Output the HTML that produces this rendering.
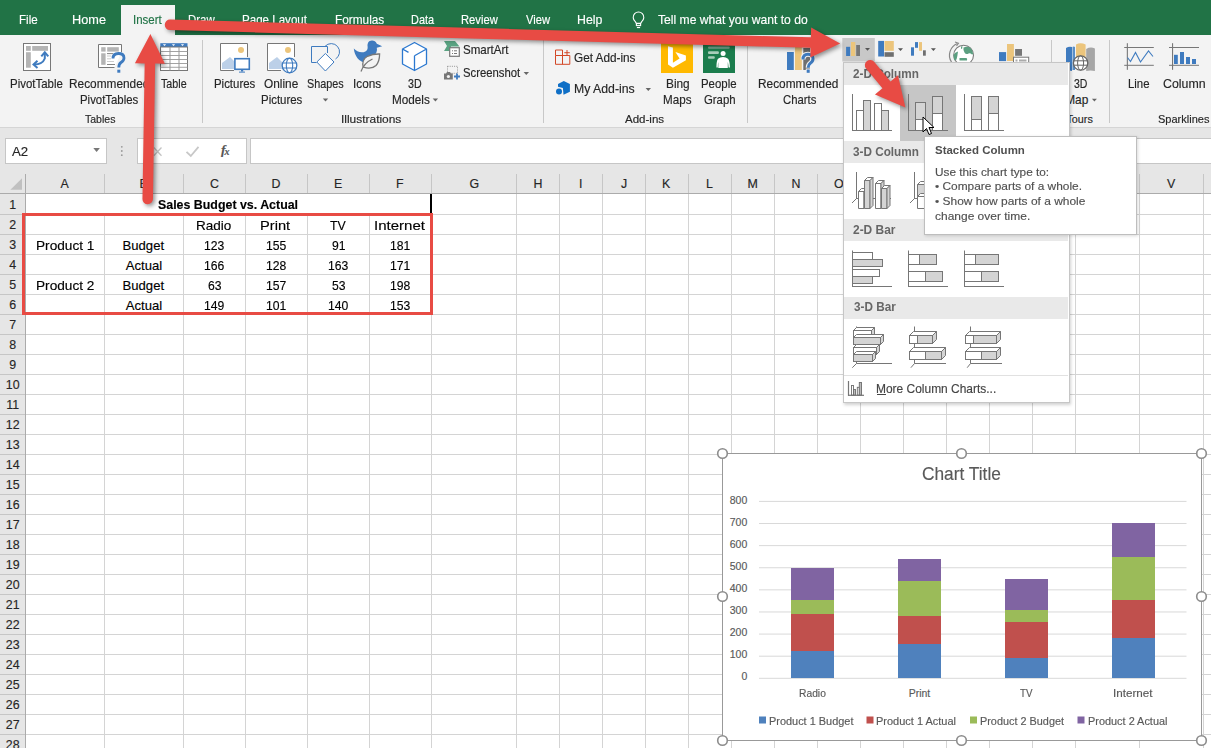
<!DOCTYPE html>
<html><head><meta charset="utf-8"><style>
html,body{margin:0;padding:0;}
body div{-webkit-text-stroke:0.15px}
body{width:1211px;height:748px;overflow:hidden;position:relative;font-family:"Liberation Sans", sans-serif;background:#fff;}
div{box-sizing:border-box;}
svg{position:absolute;overflow:visible;}
</style></head><body>
<div style="position:absolute;left:0;top:0;width:1211px;height:748px;z-index:1">
<div style="position:absolute;left:0px;top:0px;width:1211px;height:35px;background:#217346;"></div>
<div style="position:absolute;left:121px;top:5px;width:54px;height:30px;background:#f3f3f3;"></div>
<div style="position:absolute;left:0px;top:35px;width:1211px;height:92px;background:#f3f3f3;"></div>
<div style="position:absolute;left:0px;top:127px;width:1211px;height:1px;background:#d5d5d5;"></div>
<div style="position:absolute;left:0px;top:128px;width:1211px;height:65px;background:#e6e6e6;"></div>
<div style="position:absolute;left:19.39px;top:12.51px;font-size:12.7px;line-height:normal;white-space:nowrap;color:#ffffff;font-weight:400;transform:scaleX(0.9130);transform-origin:0 0;">File</div>
<div style="position:absolute;left:72.30px;top:12.51px;font-size:12.7px;line-height:normal;white-space:nowrap;color:#ffffff;font-weight:400;transform:scaleX(1.0034);transform-origin:0 0;">Home</div>
<div style="position:absolute;left:188.40px;top:12.51px;font-size:12.7px;line-height:normal;white-space:nowrap;color:#ffffff;font-weight:400;transform:scaleX(0.9000);transform-origin:0 0;">Draw</div>
<div style="position:absolute;left:242.09px;top:12.51px;font-size:12.7px;line-height:normal;white-space:nowrap;color:#ffffff;font-weight:400;transform:scaleX(0.9120);transform-origin:0 0;">Page Layout</div>
<div style="position:absolute;left:334.57px;top:12.51px;font-size:12.7px;line-height:normal;white-space:nowrap;color:#ffffff;font-weight:400;transform:scaleX(0.9315);transform-origin:0 0;">Formulas</div>
<div style="position:absolute;left:410.64px;top:12.51px;font-size:12.7px;line-height:normal;white-space:nowrap;color:#ffffff;font-weight:400;transform:scaleX(0.8600);transform-origin:0 0;">Data</div>
<div style="position:absolute;left:461.42px;top:12.51px;font-size:12.7px;line-height:normal;white-space:nowrap;color:#ffffff;font-weight:400;transform:scaleX(0.8833);transform-origin:0 0;">Review</div>
<div style="position:absolute;left:525.90px;top:12.51px;font-size:12.7px;line-height:normal;white-space:nowrap;color:#ffffff;font-weight:400;transform:scaleX(0.8823);transform-origin:0 0;">View</div>
<div style="position:absolute;left:577.43px;top:12.51px;font-size:12.7px;line-height:normal;white-space:nowrap;color:#ffffff;font-weight:400;transform:scaleX(0.9705);transform-origin:0 0;">Help</div>
<div style="position:absolute;left:658.40px;top:12.51px;font-size:12.7px;line-height:normal;white-space:nowrap;color:#ffffff;font-weight:400;transform:scaleX(0.9559);transform-origin:0 0;">Tell me what you want to do</div>
<div style="position:absolute;left:132.80px;top:12.51px;font-size:12.7px;line-height:normal;white-space:nowrap;color:#217346;font-weight:400;transform:scaleX(0.9037);transform-origin:0 0;">Insert</div>
<div style="position:absolute;left:5px;top:138px;width:102px;height:26px;background:#fff;border:1px solid #c6c6c6"></div>
<div style="position:absolute;left:137px;top:138px;width:110px;height:26px;background:#fff;border:1px solid #c6c6c6"></div>
<div style="position:absolute;left:250px;top:138px;width:961px;height:26px;background:#fff;border:1px solid #c6c6c6;border-right:none"></div>
<div style="position:absolute;left:12.00px;top:144.33px;font-size:12.9px;line-height:normal;white-space:nowrap;color:#262626;font-weight:400;transform:scaleX(1.0258);transform-origin:0 0;">A2</div>
<svg style="left:0;top:0" width="1211" height="748"><path d="M93.3 148 h6.6 l-3.3 4 z" fill="#777"/><circle cx="121.8" cy="146.8" r="0.9" fill="#999"/><circle cx="121.8" cy="151" r="0.9" fill="#999"/><circle cx="121.8" cy="155.2" r="0.9" fill="#999"/><path d="M153.8 147.5 L161.5 155.7 M161.5 147.5 L153.8 155.7" stroke="#c4c4c4" stroke-width="1.3"/><path d="M186.5 151.8 L190.8 156 L198.5 146.8" fill="none" stroke="#c8c8c8" stroke-width="1.8"/><path d="M636.4 23.4 L635.1 21.4 A5.3 5.3 0 1 1 641.9 21.4 L640.6 23.4 Z" fill="none" stroke="#fff" stroke-width="1.1"/><rect x="636.4" y="23.6" width="4.2" height="2" fill="none" stroke="#fff" stroke-width="1.1"/><rect x="636.9" y="27" width="3.2" height="1.1" fill="#fff"/></svg>
<div style="position:absolute;left:221px;top:142px;font-family:'Liberation Serif',serif;font-style:italic;font-weight:bold;font-size:13.5px;color:#555;line-height:normal;white-space:nowrap">f<span style="font-size:10px;position:relative;left:-1px;top:1px">x</span></div>
<svg style="left:0;top:0" width="1211" height="748"><path d="M22 178.2 V189.7 H10.4 Z" fill="#c0c0c0"/></svg>
</div>
<div style="position:absolute;left:0;top:0;width:1211px;height:748px;z-index:3">
<svg style="left:0;top:0" width="1211" height="748" viewBox="0 0 1211 748"><rect x="202.0" y="40" width="1" height="83" fill="#c8c8c8"/><rect x="543.0" y="40" width="1" height="83" fill="#c8c8c8"/><rect x="747.0" y="40" width="1" height="83" fill="#c8c8c8"/><rect x="1051.0" y="40" width="1" height="83" fill="#c8c8c8"/><rect x="1109.0" y="40" width="1" height="83" fill="#c8c8c8"/><rect x="23.5" y="43.5" width="27" height="27" fill="#fff" stroke="#777" stroke-width="1"/><rect x="26" y="46" width="4.8" height="4.8" fill="#b4b4b4"/><rect x="32.2" y="46" width="15.8" height="4.8" fill="#b4b4b4"/><rect x="26" y="52.2" width="4.8" height="15.5" fill="#b4b4b4"/><path d="M34 64.5 Q42.5 64.5 44.8 58.5 L44.8 53" fill="none" stroke="#3f7bbf" stroke-width="2"/><path d="M41.3 56.3 L44.8 52.3 L48.3 56.3" fill="none" stroke="#3f7bbf" stroke-width="2"/><path d="M37.5 60.8 L33.5 64.5 L37.5 68" fill="none" stroke="#3f7bbf" stroke-width="2"/><path d="M114.5 67.5 H98.5 V44.5 H121.5 V52" fill="#fff" stroke="#777" stroke-width="1"/><rect x="101.2" y="47.2" width="4.4" height="4.4" fill="#b4b4b4"/><rect x="107.2" y="47.2" width="11.6" height="4.4" fill="#b4b4b4"/><rect x="101.2" y="53.3" width="4.4" height="11.5" fill="#b4b4b4"/><rect x="107" y="53.2" width="6" height="0.9" fill="#777"/><rect x="107" y="55.5" width="4" height="1" fill="#ccc"/><rect x="107" y="58.3" width="4" height="1" fill="#ccc"/><rect x="107" y="61" width="7" height="1" fill="#ccc"/><rect x="107" y="64" width="8" height="0.9" fill="#777"/><path d="M113 58.5 Q113 53.5 118.5 53.5 Q124 53.5 124 58 Q124 60.5 121 62.5 Q118.8 64 118.8 67.5" fill="none" stroke="#3f7bbf" stroke-width="2.8"/><rect x="117.3" y="69.7" width="3" height="3" fill="#3f7bbf"/><rect x="160.3" y="43.2" width="27.2" height="4" fill="#3f7bbf"/><rect x="160.5" y="47" width="27" height="23.5" fill="#fff" stroke="#777" stroke-width="1"/><rect x="169.5" y="47" width="1" height="23.5" fill="#999"/><rect x="178.5" y="47" width="1" height="23.5" fill="#999"/><rect x="160.5" y="51" width="27" height="0.9" fill="#999"/><rect x="160.5" y="55" width="27" height="0.9" fill="#999"/><rect x="160.5" y="59" width="27" height="0.9" fill="#999"/><rect x="160.5" y="63" width="27" height="0.9" fill="#999"/><rect x="160.5" y="66.8" width="27" height="0.9" fill="#999"/><path d="M162.9 44.3 h3.2 l-1.6 1.8 z" fill="#fff"/><path d="M171.9 44.3 h3.2 l-1.6 1.8 z" fill="#fff"/><path d="M180.9 44.3 h3.2 l-1.6 1.8 z" fill="#fff"/><path d="M234 70.5 H220.5 V43.5 H247.5 V57" fill="#fff" stroke="#777" stroke-width="1"/><circle cx="241" cy="49.9" r="3" fill="#ecc57c"/><path d="M222 69 V63 L230 57 L235 62 V69 Z" fill="#bcd0e8"/><rect x="234.9" y="58.7" width="14.4" height="10.6" fill="#fff" stroke="#3f7bbf" stroke-width="1.6"/><rect x="241" y="70" width="2.2" height="1.5" fill="#3f7bbf"/><rect x="239" y="71.6" width="6" height="1" fill="#3f7bbf"/><path d="M281 70.5 H267.5 V43.5 H294.5 V57" fill="#fff" stroke="#777" stroke-width="1"/><circle cx="288" cy="49.9" r="3" fill="#ecc57c"/><path d="M269 69 V63 L277 57 L282 62 V69 Z" fill="#bcd0e8"/><circle cx="289.5" cy="65.5" r="7.3" fill="#fff" stroke="#3f7bbf" stroke-width="1.3"/><ellipse cx="289.5" cy="65.5" rx="3.2" ry="7.3" fill="none" stroke="#3f7bbf" stroke-width="1.1"/><path d="M282.5 63 H296.5 M282.5 68 H296.5" stroke="#3f7bbf" stroke-width="1.1"/><path d="M325 46.4 A8.3 8.3 0 1 1 335.5 59" fill="none" stroke="#3f7bbf" stroke-width="1"/><path d="M316.5 62.5 H311.5 V46.5 H327.5 V53" fill="none" stroke="#3f7bbf" stroke-width="1"/><path d="M325.4 53.5 L334 62 L325.4 71 L316.8 62 Z" fill="#fff" stroke="#3f7bbf" stroke-width="1"/><path d="M353.8 48.5 C354.5 56 359 62 366 63 L373 57 C376.5 54 377.5 50.5 376.8 47.8 L382.2 46.3 L376.8 43.8 C376 41.5 374 40.6 372 40.6 C368.5 40.6 367.3 43.5 367.6 46.5 C368 49.5 366.5 52.3 362 52.3 C358.5 52.3 356 50.8 353.8 48.5 Z" fill="#3f7bbf"/><path d="M363.2 67.2 Q361.5 59.5 367.5 56.3 Q373 53.8 379.6 54 Q379.6 61.5 376 65.5 Q371.5 69.8 363.2 67.2 Z" fill="#f3f3f3" stroke="#777" stroke-width="1.3"/><path d="M361 71.5 Q364 63 372.5 59" fill="none" stroke="#777" stroke-width="1.3"/><path d="M414.5 42.5 L426.5 49 V64 L414.5 70.5 L402.5 64 V49 Z M402.5 49 L408.5 52.4 M414.5 55.8 L426.5 49 M414.5 55.8 V70.5" fill="#fff" stroke="#2b78d0" stroke-width="1.3" stroke-linejoin="round"/><path d="M444 41 H455 L459.5 46.5 H451 V51 H444 L447 46 Z" fill="#5aa382"/><rect x="449.7" y="47.7" width="9.6" height="8.6" fill="#fff" stroke="#777" stroke-width="1.2"/><rect x="452" y="50.3" width="1" height="1" fill="#777"/><rect x="454" y="50.3" width="3" height="1" fill="#777"/><rect x="452" y="53" width="1" height="1" fill="#777"/><rect x="454" y="53" width="3" height="1" fill="#777"/><rect x="447.5" y="66.3" width="10" height="7" fill="none" stroke="#888" stroke-width="0.9" stroke-dasharray="1 1.2"/><path d="M444 73.5 H446 L447 72 H450 L451 73.5 H452.8 V79.6 H444 Z" fill="#777"/><circle cx="448.4" cy="76.5" r="1.6" fill="#f3f3f3"/><path d="M457 73.5 V79.5 M454 76.5 H460" stroke="#3f7bbf" stroke-width="1.8"/><path d="M555.5 55.5 H569.8 V64.3 H555.5 Z M562.5 50 V64.3 M555.5 50 H562.5 V55.5 M555.5 50 V55.5 M567 50 V55.5 M564.3 52.7 H569.8" fill="none" stroke="#d24726" stroke-width="1"/><path d="M558 84 L563.8 81.1 L569.9 84 V91.7 L563.5 94.8 L562.9 88 L558 86.8 Z" fill="#0f6fc6"/><circle cx="559" cy="91.4" r="3" fill="#0f6fc6"/><rect x="661" y="40" width="32" height="33" fill="#ffb900"/><path d="M668 46.2 L672.9 47.6 V62.7 L679.6 58.6 L675.4 52.1 L685.9 55.5 V60.2 L672.9 67.7 L668 64.4 Z" fill="#fff"/><rect x="703" y="40" width="32" height="33" fill="#1b7d4d"/><rect x="708" y="46.4" width="21.7" height="2.4" rx="1" fill="#79a892"/><rect x="708" y="51.3" width="10.9" height="2.6" rx="1" fill="#a7cdb9"/><rect x="708" y="56.2" width="6.8" height="2.6" rx="1" fill="#a7cdb9"/><circle cx="723.1" cy="53.5" r="2.5" fill="#fff"/><path d="M716.4 67.5 Q716.4 61 718 58.8 Q720 57 723 57 Q726 57 728 58.8 Q729.8 61 730 67.5 H728.6 Q728.3 63.5 727.8 62 V68 H718.3 V62 Q717.8 63.5 717.8 67.5 Z" fill="#fff"/><rect x="787" y="52" width="6.8" height="18" fill="#3f7bbf"/><rect x="795" y="47" width="6.8" height="23" fill="#ecc57c"/><rect x="803.3" y="48" width="6.7" height="22" fill="#6f6f6f"/><path d="M803 59.5 Q803 54.3 808 54.3 Q813 54.3 813 58.8 Q813 61.5 810.3 63.2 Q808.2 64.7 808.2 67.8" fill="none" stroke="#f3f3f3" stroke-width="5"/><rect x="805.8" y="68.5" width="4.8" height="5.2" fill="#f3f3f3"/><path d="M803 59.5 Q803 54.3 808 54.3 Q813 54.3 813 58.8 Q813 61.5 810.3 63.2 Q808.2 64.7 808.2 67.8" fill="none" stroke="#3f7bbf" stroke-width="3"/><rect x="806.7" y="69.5" width="3" height="3.3" fill="#3f7bbf"/><rect x="842.3" y="38" width="32.5" height="23.5" fill="#c8c8c8"/><rect x="846.1" y="46.8" width="4" height="9.2" fill="#3f7bbf"/><rect x="851" y="42" width="4.3" height="14" fill="#ecc57c"/><rect x="856.2" y="45" width="3.8" height="11" fill="#777"/><path d="M865 48 h5 l-2.5 2.8 z" fill="#555"/><rect x="878.2" y="40.9" width="5.8" height="15.6" fill="#3f7bbf"/><rect x="884.5" y="41" width="9.3" height="9.8" fill="#ecc57c"/><rect x="884.5" y="52.2" width="9.3" height="4.6" fill="#6f6f6f"/><path d="M898 48.3 h5 l-2.5 2.6 z" fill="#555"/><rect x="911" y="47.3" width="3" height="8.4" fill="#3f7bbf"/><rect x="915" y="42.1" width="3" height="5.7" fill="#3f7bbf"/><rect x="919" y="42.1" width="3" height="8.7" fill="#ecc57c"/><rect x="923" y="50.3" width="2.8" height="5.4" fill="#6f6f6f"/><path d="M930.9 48.3 h5 l-2.5 2.6 z" fill="#555"/><path d="M951.5 62 A12.5 12.5 0 0 1 957.5 43.5" fill="none" stroke="#888" stroke-width="1.2"/><path d="M955 42 L958.5 43.3 L956.5 46" fill="none" stroke="#888" stroke-width="1.1"/><circle cx="963.6" cy="55.2" r="9.9" fill="#fff" stroke="#7a7a7a" stroke-width="1.1"/><path d="M963.5 47.5 Q967 45.8 970 47.5 Q973 50 973.3 54 L972 54.5 Q970 52.5 968.5 53.5 Q966 55 964.5 52.5 Q963 50 963.5 47.5 Z M961 46.5 L962.5 46.2 L962 49 L961 48.5 Z M953.5 55 Q955 52 958 51.5 Q957.5 56 956.5 59.5 L954.5 60.5 Q953.6 58 953.5 55 Z M959.5 58 H966.5 Q967.5 58.5 967 60.5 H959.5 Z" fill="#5b9f80"/><rect x="999" y="52.1" width="7.1" height="9" fill="#3f7bbf"/><rect x="1007" y="44" width="6.9" height="17" fill="#ecc57c"/><rect x="1015.1" y="49" width="6.9" height="6.8" fill="#777"/><rect x="1013.5" y="57.2" width="15.2" height="6" fill="#fff" stroke="#777" stroke-width="1"/><rect x="1015.5" y="59.5" width="2" height="2" fill="#aaa"/><rect x="1019" y="59.5" width="7.5" height="2" fill="#aaa"/><path d="M1066 48 Q1069 46 1072 47 V71 Q1069 70 1066 71 Z" fill="#3f7bbf"/><path d="M1072.5 47 Q1073.5 46 1075 47 V70 H1072.5 Z" fill="#5a8fc8"/><path d="M1076 44.5 Q1080.5 42 1085.6 44.5 V62 H1076 Z" fill="#ecc57c"/><path d="M1086.2 49 Q1090.5 46.5 1094.9 48.5 V71 Q1090.5 70 1086.2 71 Z" fill="#a6a6a6"/><circle cx="1080.6" cy="63" r="7.2" fill="#fff" stroke="#666" stroke-width="1.3"/><ellipse cx="1080.6" cy="63" rx="3" ry="7.2" fill="none" stroke="#666" stroke-width="1"/><path d="M1073.8 60.8 H1087.4 M1073.8 65.2 H1087.4" stroke="#666" stroke-width="1"/><rect x="1126.8" y="43.2" width="1.1" height="26.6" fill="#777"/><rect x="1124.2" y="47" width="29.6" height="1" fill="#777"/><rect x="1124.2" y="64.8" width="29.6" height="1" fill="#777"/><path d="M1127.5 57.5 L1130.5 61.5 L1135.5 52.5 L1140.5 62 L1148.5 51 L1153 56.5" fill="none" stroke="#3f7bbf" stroke-width="1.1"/><rect x="1172" y="43.2" width="1.1" height="26.6" fill="#777"/><rect x="1169" y="47" width="30" height="1" fill="#777"/><rect x="1169" y="64.8" width="30" height="1" fill="#777"/><rect x="1174" y="54.8" width="3.8" height="9.2" fill="#3f7bbf"/><rect x="1180" y="52" width="4" height="12" fill="#3f7bbf"/><rect x="1186" y="57" width="4" height="7" fill="#3f7bbf"/><rect x="1192" y="59" width="4" height="5" fill="#3f7bbf"/><path d="M322.8 98.5 h5.4 l-2.7 3 z" fill="#666"/><path d="M432.7 98.5 h5.4 l-2.7 3 z" fill="#666"/><path d="M523.5999999999999 72.0 h5.4 l-2.7 3 z" fill="#666"/><path d="M645.5999999999999 88.0 h5.4 l-2.7 3 z" fill="#666"/></svg>
<div style="position:absolute;left:10.40px;top:77.03px;font-size:11.9px;line-height:normal;white-space:nowrap;color:#262626;font-weight:400;transform:scaleX(0.9630);transform-origin:0 0;">PivotTable</div>
<div style="position:absolute;left:69.40px;top:77.03px;font-size:11.9px;line-height:normal;white-space:nowrap;color:#262626;font-weight:400;transform:scaleX(0.9972);transform-origin:0 0;">Recommended</div>
<div style="position:absolute;left:80.40px;top:93.13px;font-size:11.9px;line-height:normal;white-space:nowrap;color:#262626;font-weight:400;transform:scaleX(0.9579);transform-origin:0 0;">PivotTables</div>
<div style="position:absolute;left:161.00px;top:77.03px;font-size:11.9px;line-height:normal;white-space:nowrap;color:#262626;font-weight:400;transform:scaleX(0.9024);transform-origin:0 0;">Table</div>
<div style="position:absolute;left:85.40px;top:112.73px;font-size:10.8px;line-height:normal;white-space:nowrap;color:#262626;font-weight:400;transform:scaleX(0.9745);transform-origin:0 0;">Tables</div>
<div style="position:absolute;left:213.50px;top:77.03px;font-size:11.9px;line-height:normal;white-space:nowrap;color:#262626;font-weight:400;transform:scaleX(0.9603);transform-origin:0 0;">Pictures</div>
<div style="position:absolute;left:264.40px;top:77.03px;font-size:11.9px;line-height:normal;white-space:nowrap;color:#262626;font-weight:400;transform:scaleX(0.9954);transform-origin:0 0;">Online</div>
<div style="position:absolute;left:260.60px;top:93.13px;font-size:11.9px;line-height:normal;white-space:nowrap;color:#262626;font-weight:400;transform:scaleX(0.9626);transform-origin:0 0;">Pictures</div>
<div style="position:absolute;left:307.30px;top:77.03px;font-size:11.9px;line-height:normal;white-space:nowrap;color:#262626;font-weight:400;transform:scaleX(0.9088);transform-origin:0 0;">Shapes</div>
<div style="position:absolute;left:353.41px;top:77.03px;font-size:11.9px;line-height:normal;white-space:nowrap;color:#262626;font-weight:400;transform:scaleX(0.9900);transform-origin:0 0;">Icons</div>
<div style="position:absolute;left:408.00px;top:77.03px;font-size:11.9px;line-height:normal;white-space:nowrap;color:#262626;font-weight:400;transform:scaleX(0.8967);transform-origin:0 0;">3D</div>
<div style="position:absolute;left:391.60px;top:93.13px;font-size:11.9px;line-height:normal;white-space:nowrap;color:#262626;font-weight:400;transform:scaleX(0.9873);transform-origin:0 0;">Models</div>
<div style="position:absolute;left:340.99px;top:112.73px;font-size:10.8px;line-height:normal;white-space:nowrap;color:#262626;font-weight:400;transform:scaleX(1.1050);transform-origin:0 0;">Illustrations</div>
<div style="position:absolute;left:463.40px;top:42.73px;font-size:11.9px;line-height:normal;white-space:nowrap;color:#262626;font-weight:400;transform:scaleX(0.9705);transform-origin:0 0;">SmartArt</div>
<div style="position:absolute;left:463.40px;top:65.53px;font-size:11.9px;line-height:normal;white-space:nowrap;color:#262626;font-weight:400;transform:scaleX(0.9499);transform-origin:0 0;">Screenshot</div>
<div style="position:absolute;left:574.40px;top:50.63px;font-size:11.9px;line-height:normal;white-space:nowrap;color:#262626;font-weight:400;transform:scaleX(0.9898);transform-origin:0 0;">Get Add-ins</div>
<div style="position:absolute;left:574.40px;top:82.03px;font-size:11.9px;line-height:normal;white-space:nowrap;color:#262626;font-weight:400;transform:scaleX(1.0315);transform-origin:0 0;">My Add-ins</div>
<div style="position:absolute;left:665.50px;top:77.03px;font-size:11.9px;line-height:normal;white-space:nowrap;color:#262626;font-weight:400;transform:scaleX(0.9963);transform-origin:0 0;">Bing</div>
<div style="position:absolute;left:662.50px;top:93.13px;font-size:11.9px;line-height:normal;white-space:nowrap;color:#262626;font-weight:400;transform:scaleX(0.9783);transform-origin:0 0;">Maps</div>
<div style="position:absolute;left:701.00px;top:77.03px;font-size:11.9px;line-height:normal;white-space:nowrap;color:#262626;font-weight:400;transform:scaleX(0.9596);transform-origin:0 0;">People</div>
<div style="position:absolute;left:703.50px;top:93.13px;font-size:11.9px;line-height:normal;white-space:nowrap;color:#262626;font-weight:400;transform:scaleX(0.9558);transform-origin:0 0;">Graph</div>
<div style="position:absolute;left:625.00px;top:112.73px;font-size:10.8px;line-height:normal;white-space:nowrap;color:#262626;font-weight:400;transform:scaleX(1.0669);transform-origin:0 0;">Add-ins</div>
<div style="position:absolute;left:758.40px;top:77.03px;font-size:11.9px;line-height:normal;white-space:nowrap;color:#262626;font-weight:400;transform:scaleX(0.9972);transform-origin:0 0;">Recommended</div>
<div style="position:absolute;left:782.50px;top:93.13px;font-size:11.9px;line-height:normal;white-space:nowrap;color:#262626;font-weight:400;transform:scaleX(0.9522);transform-origin:0 0;">Charts</div>
<div style="position:absolute;left:1074.20px;top:77.03px;font-size:11.9px;line-height:normal;white-space:nowrap;color:#262626;font-weight:400;transform:scaleX(0.8839);transform-origin:0 0;">3D</div>
<div style="position:absolute;left:1065.18px;top:93.13px;font-size:11.9px;line-height:normal;white-space:nowrap;color:#262626;font-weight:400;">Map</div>
<div style="position:absolute;left:1066.40px;top:112.73px;font-size:10.8px;line-height:normal;white-space:nowrap;color:#262626;font-weight:400;">Tours</div>
<svg style="left:0;top:0" width="1211" height="748"><path d="M1091.9 98.8 h5 l-2.5 2.6 z" fill="#666"/></svg>
<div style="position:absolute;left:1128.30px;top:77.03px;font-size:11.9px;line-height:normal;white-space:nowrap;color:#262626;font-weight:400;transform:scaleX(0.9577);transform-origin:0 0;">Line</div>
<div style="position:absolute;left:1162.60px;top:77.03px;font-size:11.9px;line-height:normal;white-space:nowrap;color:#262626;font-weight:400;transform:scaleX(1.0382);transform-origin:0 0;">Column</div>
<div style="position:absolute;left:1157.50px;top:112.73px;font-size:10.8px;line-height:normal;white-space:nowrap;color:#262626;font-weight:400;transform:scaleX(1.0194);transform-origin:0 0;">Sparklines</div>
</div>
<div style="position:absolute;left:0;top:0;width:1211px;height:748px;z-index:2">
<svg style="left:0;top:0" width="1211" height="748" viewBox="0 0 1211 748"><rect x="104" y="174" width="1" height="19" fill="#c6c6c6"/><rect x="183" y="174" width="1" height="19" fill="#c6c6c6"/><rect x="245" y="174" width="1" height="19" fill="#c6c6c6"/><rect x="307" y="174" width="1" height="19" fill="#c6c6c6"/><rect x="369" y="174" width="1" height="19" fill="#c6c6c6"/><rect x="431" y="174" width="1" height="19" fill="#c6c6c6"/><rect x="516" y="174" width="1" height="19" fill="#c6c6c6"/><rect x="559" y="174" width="1" height="19" fill="#c6c6c6"/><rect x="602" y="174" width="1" height="19" fill="#c6c6c6"/><rect x="645" y="174" width="1" height="19" fill="#c6c6c6"/><rect x="688" y="174" width="1" height="19" fill="#c6c6c6"/><rect x="731" y="174" width="1" height="19" fill="#c6c6c6"/><rect x="774" y="174" width="1" height="19" fill="#c6c6c6"/><rect x="817" y="174" width="1" height="19" fill="#c6c6c6"/><rect x="860" y="174" width="1" height="19" fill="#c6c6c6"/><rect x="903" y="174" width="1" height="19" fill="#c6c6c6"/><rect x="946" y="174" width="1" height="19" fill="#c6c6c6"/><rect x="989" y="174" width="1" height="19" fill="#c6c6c6"/><rect x="1032" y="174" width="1" height="19" fill="#c6c6c6"/><rect x="1075" y="174" width="1" height="19" fill="#c6c6c6"/><rect x="1139" y="174" width="1" height="19" fill="#c6c6c6"/><rect x="1203" y="174" width="1" height="19" fill="#c6c6c6"/><rect x="1266" y="174" width="1" height="19" fill="#c6c6c6"/><rect x="0" y="193" width="1211" height="1" fill="#ababab"/><rect x="0" y="194" width="25" height="554" fill="#e6e6e6"/><rect x="25" y="174" width="1" height="574" fill="#ababab"/><rect x="104" y="194" width="1" height="554" fill="#d4d4d4"/><rect x="183" y="194" width="1" height="554" fill="#d4d4d4"/><rect x="245" y="194" width="1" height="554" fill="#d4d4d4"/><rect x="307" y="194" width="1" height="554" fill="#d4d4d4"/><rect x="369" y="194" width="1" height="554" fill="#d4d4d4"/><rect x="431" y="194" width="1" height="554" fill="#d4d4d4"/><rect x="516" y="194" width="1" height="554" fill="#d4d4d4"/><rect x="559" y="194" width="1" height="554" fill="#d4d4d4"/><rect x="602" y="194" width="1" height="554" fill="#d4d4d4"/><rect x="645" y="194" width="1" height="554" fill="#d4d4d4"/><rect x="688" y="194" width="1" height="554" fill="#d4d4d4"/><rect x="731" y="194" width="1" height="554" fill="#d4d4d4"/><rect x="774" y="194" width="1" height="554" fill="#d4d4d4"/><rect x="817" y="194" width="1" height="554" fill="#d4d4d4"/><rect x="860" y="194" width="1" height="554" fill="#d4d4d4"/><rect x="903" y="194" width="1" height="554" fill="#d4d4d4"/><rect x="946" y="194" width="1" height="554" fill="#d4d4d4"/><rect x="989" y="194" width="1" height="554" fill="#d4d4d4"/><rect x="1032" y="194" width="1" height="554" fill="#d4d4d4"/><rect x="1075" y="194" width="1" height="554" fill="#d4d4d4"/><rect x="1139" y="194" width="1" height="554" fill="#d4d4d4"/><rect x="1203" y="194" width="1" height="554" fill="#d4d4d4"/><rect x="1266" y="194" width="1" height="554" fill="#d4d4d4"/><rect x="26" y="214" width="1185" height="1" fill="#d4d4d4"/><rect x="0" y="214" width="25" height="1" fill="#c6c6c6"/><rect x="26" y="234" width="1185" height="1" fill="#d4d4d4"/><rect x="0" y="234" width="25" height="1" fill="#c6c6c6"/><rect x="26" y="254" width="1185" height="1" fill="#d4d4d4"/><rect x="0" y="254" width="25" height="1" fill="#c6c6c6"/><rect x="26" y="274" width="1185" height="1" fill="#d4d4d4"/><rect x="0" y="274" width="25" height="1" fill="#c6c6c6"/><rect x="26" y="294" width="1185" height="1" fill="#d4d4d4"/><rect x="0" y="294" width="25" height="1" fill="#c6c6c6"/><rect x="26" y="314" width="1185" height="1" fill="#d4d4d4"/><rect x="0" y="314" width="25" height="1" fill="#c6c6c6"/><rect x="26" y="334" width="1185" height="1" fill="#d4d4d4"/><rect x="0" y="334" width="25" height="1" fill="#c6c6c6"/><rect x="26" y="354" width="1185" height="1" fill="#d4d4d4"/><rect x="0" y="354" width="25" height="1" fill="#c6c6c6"/><rect x="26" y="374" width="1185" height="1" fill="#d4d4d4"/><rect x="0" y="374" width="25" height="1" fill="#c6c6c6"/><rect x="26" y="394" width="1185" height="1" fill="#d4d4d4"/><rect x="0" y="394" width="25" height="1" fill="#c6c6c6"/><rect x="26" y="414" width="1185" height="1" fill="#d4d4d4"/><rect x="0" y="414" width="25" height="1" fill="#c6c6c6"/><rect x="26" y="434" width="1185" height="1" fill="#d4d4d4"/><rect x="0" y="434" width="25" height="1" fill="#c6c6c6"/><rect x="26" y="454" width="1185" height="1" fill="#d4d4d4"/><rect x="0" y="454" width="25" height="1" fill="#c6c6c6"/><rect x="26" y="474" width="1185" height="1" fill="#d4d4d4"/><rect x="0" y="474" width="25" height="1" fill="#c6c6c6"/><rect x="26" y="494" width="1185" height="1" fill="#d4d4d4"/><rect x="0" y="494" width="25" height="1" fill="#c6c6c6"/><rect x="26" y="514" width="1185" height="1" fill="#d4d4d4"/><rect x="0" y="514" width="25" height="1" fill="#c6c6c6"/><rect x="26" y="534" width="1185" height="1" fill="#d4d4d4"/><rect x="0" y="534" width="25" height="1" fill="#c6c6c6"/><rect x="26" y="554" width="1185" height="1" fill="#d4d4d4"/><rect x="0" y="554" width="25" height="1" fill="#c6c6c6"/><rect x="26" y="574" width="1185" height="1" fill="#d4d4d4"/><rect x="0" y="574" width="25" height="1" fill="#c6c6c6"/><rect x="26" y="594" width="1185" height="1" fill="#d4d4d4"/><rect x="0" y="594" width="25" height="1" fill="#c6c6c6"/><rect x="26" y="614" width="1185" height="1" fill="#d4d4d4"/><rect x="0" y="614" width="25" height="1" fill="#c6c6c6"/><rect x="26" y="634" width="1185" height="1" fill="#d4d4d4"/><rect x="0" y="634" width="25" height="1" fill="#c6c6c6"/><rect x="26" y="654" width="1185" height="1" fill="#d4d4d4"/><rect x="0" y="654" width="25" height="1" fill="#c6c6c6"/><rect x="26" y="674" width="1185" height="1" fill="#d4d4d4"/><rect x="0" y="674" width="25" height="1" fill="#c6c6c6"/><rect x="26" y="694" width="1185" height="1" fill="#d4d4d4"/><rect x="0" y="694" width="25" height="1" fill="#c6c6c6"/><rect x="26" y="714" width="1185" height="1" fill="#d4d4d4"/><rect x="0" y="714" width="25" height="1" fill="#c6c6c6"/><rect x="26" y="734" width="1185" height="1" fill="#d4d4d4"/><rect x="0" y="734" width="25" height="1" fill="#c6c6c6"/><rect x="26" y="754" width="1185" height="1" fill="#d4d4d4"/><rect x="0" y="754" width="25" height="1" fill="#c6c6c6"/></svg>
<div style="position:absolute;left:26px;top:194px;width:405px;height:20px;background:#fff;"></div>
<div style="position:absolute;left:430px;top:194px;width:2px;height:20px;background:#000;"></div>
<div style="position:absolute;left:60.60px;top:176.78px;font-size:12.4px;line-height:normal;white-space:nowrap;color:#262626;font-weight:400;">A</div>
<div style="position:absolute;left:139.60px;top:176.78px;font-size:12.4px;line-height:normal;white-space:nowrap;color:#262626;font-weight:400;">B</div>
<div style="position:absolute;left:210.10px;top:176.78px;font-size:12.4px;line-height:normal;white-space:nowrap;color:#262626;font-weight:400;">C</div>
<div style="position:absolute;left:271.60px;top:176.78px;font-size:12.4px;line-height:normal;white-space:nowrap;color:#262626;font-weight:400;">D</div>
<div style="position:absolute;left:334.10px;top:176.78px;font-size:12.4px;line-height:normal;white-space:nowrap;color:#262626;font-weight:400;">E</div>
<div style="position:absolute;left:396.10px;top:176.78px;font-size:12.4px;line-height:normal;white-space:nowrap;color:#262626;font-weight:400;">F</div>
<div style="position:absolute;left:469.60px;top:176.78px;font-size:12.4px;line-height:normal;white-space:nowrap;color:#262626;font-weight:400;">G</div>
<div style="position:absolute;left:533.60px;top:176.78px;font-size:12.4px;line-height:normal;white-space:nowrap;color:#262626;font-weight:400;">H</div>
<div style="position:absolute;left:579.10px;top:176.78px;font-size:12.4px;line-height:normal;white-space:nowrap;color:#262626;font-weight:400;">I</div>
<div style="position:absolute;left:621.10px;top:176.78px;font-size:12.4px;line-height:normal;white-space:nowrap;color:#262626;font-weight:400;">J</div>
<div style="position:absolute;left:662.10px;top:176.78px;font-size:12.4px;line-height:normal;white-space:nowrap;color:#262626;font-weight:400;">K</div>
<div style="position:absolute;left:706.10px;top:176.78px;font-size:12.4px;line-height:normal;white-space:nowrap;color:#262626;font-weight:400;">L</div>
<div style="position:absolute;left:747.60px;top:176.78px;font-size:12.4px;line-height:normal;white-space:nowrap;color:#262626;font-weight:400;">M</div>
<div style="position:absolute;left:791.60px;top:176.78px;font-size:12.4px;line-height:normal;white-space:nowrap;color:#262626;font-weight:400;">N</div>
<div style="position:absolute;left:834.10px;top:176.78px;font-size:12.4px;line-height:normal;white-space:nowrap;color:#262626;font-weight:400;">O</div>
<div style="position:absolute;left:877.60px;top:176.78px;font-size:12.4px;line-height:normal;white-space:nowrap;color:#262626;font-weight:400;">P</div>
<div style="position:absolute;left:920.10px;top:176.78px;font-size:12.4px;line-height:normal;white-space:nowrap;color:#262626;font-weight:400;">Q</div>
<div style="position:absolute;left:963.10px;top:176.78px;font-size:12.4px;line-height:normal;white-space:nowrap;color:#262626;font-weight:400;">R</div>
<div style="position:absolute;left:1007.10px;top:176.78px;font-size:12.4px;line-height:normal;white-space:nowrap;color:#262626;font-weight:400;">S</div>
<div style="position:absolute;left:1050.10px;top:176.78px;font-size:12.4px;line-height:normal;white-space:nowrap;color:#262626;font-weight:400;">T</div>
<div style="position:absolute;left:1103.60px;top:176.78px;font-size:12.4px;line-height:normal;white-space:nowrap;color:#262626;font-weight:400;">U</div>
<div style="position:absolute;left:1167.10px;top:176.78px;font-size:12.4px;line-height:normal;white-space:nowrap;color:#262626;font-weight:400;">V</div>
<div style="position:absolute;left:1229.10px;top:176.78px;font-size:12.4px;line-height:normal;white-space:nowrap;color:#262626;font-weight:400;">W</div>
<div style="position:absolute;left:9.20px;top:198.18px;font-size:12.4px;line-height:normal;white-space:nowrap;color:#262626;font-weight:400;">1</div>
<div style="position:absolute;left:9.20px;top:218.18px;font-size:12.4px;line-height:normal;white-space:nowrap;color:#262626;font-weight:400;">2</div>
<div style="position:absolute;left:9.20px;top:238.18px;font-size:12.4px;line-height:normal;white-space:nowrap;color:#262626;font-weight:400;">3</div>
<div style="position:absolute;left:9.20px;top:258.18px;font-size:12.4px;line-height:normal;white-space:nowrap;color:#262626;font-weight:400;">4</div>
<div style="position:absolute;left:9.20px;top:278.18px;font-size:12.4px;line-height:normal;white-space:nowrap;color:#262626;font-weight:400;">5</div>
<div style="position:absolute;left:9.20px;top:298.18px;font-size:12.4px;line-height:normal;white-space:nowrap;color:#262626;font-weight:400;">6</div>
<div style="position:absolute;left:9.20px;top:318.18px;font-size:12.4px;line-height:normal;white-space:nowrap;color:#262626;font-weight:400;">7</div>
<div style="position:absolute;left:9.20px;top:338.18px;font-size:12.4px;line-height:normal;white-space:nowrap;color:#262626;font-weight:400;">8</div>
<div style="position:absolute;left:9.20px;top:358.18px;font-size:12.4px;line-height:normal;white-space:nowrap;color:#262626;font-weight:400;">9</div>
<div style="position:absolute;left:5.75px;top:378.18px;font-size:12.4px;line-height:normal;white-space:nowrap;color:#262626;font-weight:400;">10</div>
<div style="position:absolute;left:6.21px;top:398.18px;font-size:12.4px;line-height:normal;white-space:nowrap;color:#262626;font-weight:400;">11</div>
<div style="position:absolute;left:5.75px;top:418.18px;font-size:12.4px;line-height:normal;white-space:nowrap;color:#262626;font-weight:400;">12</div>
<div style="position:absolute;left:5.75px;top:438.18px;font-size:12.4px;line-height:normal;white-space:nowrap;color:#262626;font-weight:400;">13</div>
<div style="position:absolute;left:5.75px;top:458.18px;font-size:12.4px;line-height:normal;white-space:nowrap;color:#262626;font-weight:400;">14</div>
<div style="position:absolute;left:5.75px;top:478.18px;font-size:12.4px;line-height:normal;white-space:nowrap;color:#262626;font-weight:400;">15</div>
<div style="position:absolute;left:5.75px;top:498.18px;font-size:12.4px;line-height:normal;white-space:nowrap;color:#262626;font-weight:400;">16</div>
<div style="position:absolute;left:5.75px;top:518.18px;font-size:12.4px;line-height:normal;white-space:nowrap;color:#262626;font-weight:400;">17</div>
<div style="position:absolute;left:5.75px;top:538.18px;font-size:12.4px;line-height:normal;white-space:nowrap;color:#262626;font-weight:400;">18</div>
<div style="position:absolute;left:5.75px;top:558.18px;font-size:12.4px;line-height:normal;white-space:nowrap;color:#262626;font-weight:400;">19</div>
<div style="position:absolute;left:5.75px;top:578.18px;font-size:12.4px;line-height:normal;white-space:nowrap;color:#262626;font-weight:400;">20</div>
<div style="position:absolute;left:5.75px;top:598.18px;font-size:12.4px;line-height:normal;white-space:nowrap;color:#262626;font-weight:400;">21</div>
<div style="position:absolute;left:5.75px;top:618.18px;font-size:12.4px;line-height:normal;white-space:nowrap;color:#262626;font-weight:400;">22</div>
<div style="position:absolute;left:5.75px;top:638.18px;font-size:12.4px;line-height:normal;white-space:nowrap;color:#262626;font-weight:400;">23</div>
<div style="position:absolute;left:5.75px;top:658.18px;font-size:12.4px;line-height:normal;white-space:nowrap;color:#262626;font-weight:400;">24</div>
<div style="position:absolute;left:5.75px;top:678.18px;font-size:12.4px;line-height:normal;white-space:nowrap;color:#262626;font-weight:400;">25</div>
<div style="position:absolute;left:5.75px;top:698.18px;font-size:12.4px;line-height:normal;white-space:nowrap;color:#262626;font-weight:400;">26</div>
<div style="position:absolute;left:5.75px;top:718.18px;font-size:12.4px;line-height:normal;white-space:nowrap;color:#262626;font-weight:400;">27</div>
<div style="position:absolute;left:5.75px;top:738.18px;font-size:12.4px;line-height:normal;white-space:nowrap;color:#262626;font-weight:400;">28</div>
<div style="position:absolute;left:158.30px;top:196.84px;font-size:13.1px;line-height:normal;white-space:nowrap;color:#000;font-weight:700;transform:scaleX(0.9465);transform-origin:0 0;">Sales Budget vs. Actual</div>
<div style="position:absolute;left:196.47px;top:218.14px;font-size:13.1px;line-height:normal;white-space:nowrap;color:#000;font-weight:400;transform:scaleX(1.0325);transform-origin:0 0;">Radio</div>
<div style="position:absolute;left:260.18px;top:218.14px;font-size:13.1px;line-height:normal;white-space:nowrap;color:#000;font-weight:400;transform:scaleX(1.1185);transform-origin:0 0;">Print</div>
<div style="position:absolute;left:330.00px;top:218.14px;font-size:13.1px;line-height:normal;white-space:nowrap;color:#000;font-weight:400;transform:scaleX(0.9413);transform-origin:0 0;">TV</div>
<div style="position:absolute;left:374.25px;top:218.14px;font-size:13.1px;line-height:normal;white-space:nowrap;color:#000;font-weight:400;transform:scaleX(1.1470);transform-origin:0 0;">Internet</div>
<div style="position:absolute;left:35.71px;top:238.14px;font-size:13.1px;line-height:normal;white-space:nowrap;color:#000;font-weight:400;transform:scaleX(1.0427);transform-origin:0 0;">Product 1</div>
<div style="position:absolute;left:122.57px;top:238.14px;font-size:13.1px;line-height:normal;white-space:nowrap;color:#000;font-weight:400;">Budget</div>
<div style="position:absolute;left:204.01px;top:238.14px;font-size:13.1px;line-height:normal;white-space:nowrap;color:#000;font-weight:400;transform:scaleX(0.9300);transform-origin:0 0;">123</div>
<div style="position:absolute;left:266.01px;top:238.14px;font-size:13.1px;line-height:normal;white-space:nowrap;color:#000;font-weight:400;transform:scaleX(0.9300);transform-origin:0 0;">155</div>
<div style="position:absolute;left:331.86px;top:238.14px;font-size:13.1px;line-height:normal;white-space:nowrap;color:#000;font-weight:400;transform:scaleX(0.9300);transform-origin:0 0;">91</div>
<div style="position:absolute;left:390.01px;top:238.14px;font-size:13.1px;line-height:normal;white-space:nowrap;color:#000;font-weight:400;transform:scaleX(0.9300);transform-origin:0 0;">181</div>
<div style="position:absolute;left:125.76px;top:258.14px;font-size:13.1px;line-height:normal;white-space:nowrap;color:#000;font-weight:400;">Actual</div>
<div style="position:absolute;left:204.01px;top:258.14px;font-size:13.1px;line-height:normal;white-space:nowrap;color:#000;font-weight:400;transform:scaleX(0.9300);transform-origin:0 0;">166</div>
<div style="position:absolute;left:266.01px;top:258.14px;font-size:13.1px;line-height:normal;white-space:nowrap;color:#000;font-weight:400;transform:scaleX(0.9300);transform-origin:0 0;">128</div>
<div style="position:absolute;left:328.01px;top:258.14px;font-size:13.1px;line-height:normal;white-space:nowrap;color:#000;font-weight:400;transform:scaleX(0.9300);transform-origin:0 0;">163</div>
<div style="position:absolute;left:390.01px;top:258.14px;font-size:13.1px;line-height:normal;white-space:nowrap;color:#000;font-weight:400;transform:scaleX(0.9300);transform-origin:0 0;">171</div>
<div style="position:absolute;left:35.71px;top:278.14px;font-size:13.1px;line-height:normal;white-space:nowrap;color:#000;font-weight:400;transform:scaleX(1.0427);transform-origin:0 0;">Product 2</div>
<div style="position:absolute;left:122.57px;top:278.14px;font-size:13.1px;line-height:normal;white-space:nowrap;color:#000;font-weight:400;">Budget</div>
<div style="position:absolute;left:207.86px;top:278.14px;font-size:13.1px;line-height:normal;white-space:nowrap;color:#000;font-weight:400;transform:scaleX(0.9300);transform-origin:0 0;">63</div>
<div style="position:absolute;left:266.01px;top:278.14px;font-size:13.1px;line-height:normal;white-space:nowrap;color:#000;font-weight:400;transform:scaleX(0.9300);transform-origin:0 0;">157</div>
<div style="position:absolute;left:331.86px;top:278.14px;font-size:13.1px;line-height:normal;white-space:nowrap;color:#000;font-weight:400;transform:scaleX(0.9300);transform-origin:0 0;">53</div>
<div style="position:absolute;left:390.01px;top:278.14px;font-size:13.1px;line-height:normal;white-space:nowrap;color:#000;font-weight:400;transform:scaleX(0.9300);transform-origin:0 0;">198</div>
<div style="position:absolute;left:125.76px;top:298.14px;font-size:13.1px;line-height:normal;white-space:nowrap;color:#000;font-weight:400;">Actual</div>
<div style="position:absolute;left:204.01px;top:298.14px;font-size:13.1px;line-height:normal;white-space:nowrap;color:#000;font-weight:400;transform:scaleX(0.9300);transform-origin:0 0;">149</div>
<div style="position:absolute;left:266.01px;top:298.14px;font-size:13.1px;line-height:normal;white-space:nowrap;color:#000;font-weight:400;transform:scaleX(0.9300);transform-origin:0 0;">101</div>
<div style="position:absolute;left:328.01px;top:298.14px;font-size:13.1px;line-height:normal;white-space:nowrap;color:#000;font-weight:400;transform:scaleX(0.9300);transform-origin:0 0;">140</div>
<div style="position:absolute;left:390.01px;top:298.14px;font-size:13.1px;line-height:normal;white-space:nowrap;color:#000;font-weight:400;transform:scaleX(0.9300);transform-origin:0 0;">153</div>
<div style="position:absolute;left:22px;top:213px;width:411px;height:102px;background:transparent;border:3px solid #e84b44"></div>
</div>
<div style="position:absolute;left:0;top:0;width:1211px;height:748px;z-index:5">
<div style="position:absolute;left:722px;top:453px;width:480px;height:288px;background:#fff;border:1px solid #999"></div>
<svg style="left:0;top:0" width="1211" height="748" viewBox="0 0 1211 748"><rect x="759" y="677.80" width="427.5" height="1" fill="#d9d9d9"/><rect x="759" y="655.69" width="427.5" height="1" fill="#d9d9d9"/><rect x="759" y="633.57" width="427.5" height="1" fill="#d9d9d9"/><rect x="759" y="611.46" width="427.5" height="1" fill="#d9d9d9"/><rect x="759" y="589.35" width="427.5" height="1" fill="#d9d9d9"/><rect x="759" y="567.24" width="427.5" height="1" fill="#d9d9d9"/><rect x="759" y="545.12" width="427.5" height="1" fill="#d9d9d9"/><rect x="759" y="523.01" width="427.5" height="1" fill="#d9d9d9"/><rect x="759" y="500.90" width="427.5" height="1" fill="#d9d9d9"/><rect x="791" y="651" width="43" height="27" fill="#4f81bd"/><rect x="791" y="614" width="43" height="37" fill="#c0504d"/><rect x="791" y="600" width="43" height="14" fill="#9bbb59"/><rect x="791" y="568" width="43" height="32" fill="#8064a2"/><rect x="898" y="644" width="43" height="34" fill="#4f81bd"/><rect x="898" y="616" width="43" height="28" fill="#c0504d"/><rect x="898" y="581" width="43" height="35" fill="#9bbb59"/><rect x="898" y="559" width="43" height="22" fill="#8064a2"/><rect x="1005" y="658" width="43" height="20" fill="#4f81bd"/><rect x="1005" y="622" width="43" height="36" fill="#c0504d"/><rect x="1005" y="610" width="43" height="12" fill="#9bbb59"/><rect x="1005" y="579" width="43" height="31" fill="#8064a2"/><rect x="1112" y="638" width="43" height="40" fill="#4f81bd"/><rect x="1112" y="600" width="43" height="38" fill="#c0504d"/><rect x="1112" y="557" width="43" height="43" fill="#9bbb59"/><rect x="1112" y="523" width="43" height="34" fill="#8064a2"/><circle cx="722.5" cy="453.5" r="4.8" fill="#fff" stroke="#8c8c8c" stroke-width="1.6"/><circle cx="722.5" cy="596.5" r="4.8" fill="#fff" stroke="#8c8c8c" stroke-width="1.6"/><circle cx="722.5" cy="740.5" r="4.8" fill="#fff" stroke="#8c8c8c" stroke-width="1.6"/><circle cx="961.5" cy="453.5" r="4.8" fill="#fff" stroke="#8c8c8c" stroke-width="1.6"/><circle cx="961.5" cy="740.5" r="4.8" fill="#fff" stroke="#8c8c8c" stroke-width="1.6"/><circle cx="1201.5" cy="453.5" r="4.8" fill="#fff" stroke="#8c8c8c" stroke-width="1.6"/><circle cx="1201.5" cy="596.5" r="4.8" fill="#fff" stroke="#8c8c8c" stroke-width="1.6"/><circle cx="1201.5" cy="740.5" r="4.8" fill="#fff" stroke="#8c8c8c" stroke-width="1.6"/><rect x="759" y="716.5" width="7" height="7" fill="#4f81bd"/><rect x="866.5" y="716.5" width="7" height="7" fill="#c0504d"/><rect x="970" y="716.5" width="7" height="7" fill="#9bbb59"/><rect x="1077.5" y="716.5" width="7" height="7" fill="#8064a2"/></svg>
<div style="position:absolute;left:921.80px;top:464.37px;font-size:17.6px;line-height:normal;white-space:nowrap;color:#595959;font-weight:400;transform:scaleX(0.9836);transform-origin:0 0;">Chart Title</div>
<div style="position:absolute;left:741.40px;top:670.40px;font-size:10.5px;line-height:normal;white-space:nowrap;color:#595959;font-weight:400;">0</div>
<div style="position:absolute;left:729.72px;top:648.28px;font-size:10.5px;line-height:normal;white-space:nowrap;color:#595959;font-weight:400;">100</div>
<div style="position:absolute;left:729.72px;top:626.17px;font-size:10.5px;line-height:normal;white-space:nowrap;color:#595959;font-weight:400;">200</div>
<div style="position:absolute;left:729.72px;top:604.06px;font-size:10.5px;line-height:normal;white-space:nowrap;color:#595959;font-weight:400;">300</div>
<div style="position:absolute;left:729.72px;top:581.95px;font-size:10.5px;line-height:normal;white-space:nowrap;color:#595959;font-weight:400;">400</div>
<div style="position:absolute;left:729.72px;top:559.83px;font-size:10.5px;line-height:normal;white-space:nowrap;color:#595959;font-weight:400;">500</div>
<div style="position:absolute;left:729.72px;top:537.72px;font-size:10.5px;line-height:normal;white-space:nowrap;color:#595959;font-weight:400;">600</div>
<div style="position:absolute;left:729.72px;top:515.61px;font-size:10.5px;line-height:normal;white-space:nowrap;color:#595959;font-weight:400;">700</div>
<div style="position:absolute;left:729.72px;top:493.50px;font-size:10.5px;line-height:normal;white-space:nowrap;color:#595959;font-weight:400;">800</div>
<div style="position:absolute;left:798.70px;top:687.10px;font-size:10.5px;line-height:normal;white-space:nowrap;color:#595959;font-weight:400;transform:scaleX(0.9784);transform-origin:0 0;">Radio</div>
<div style="position:absolute;left:908.66px;top:687.10px;font-size:10.5px;line-height:normal;white-space:nowrap;color:#595959;font-weight:400;">Print</div>
<div style="position:absolute;left:1019.95px;top:687.10px;font-size:10.5px;line-height:normal;white-space:nowrap;color:#595959;font-weight:400;transform:scaleX(0.9319);transform-origin:0 0;">TV</div>
<div style="position:absolute;left:1113.00px;top:687.10px;font-size:10.5px;line-height:normal;white-space:nowrap;color:#595959;font-weight:400;transform:scaleX(1.1096);transform-origin:0 0;">Internet</div>
<div style="position:absolute;left:768.70px;top:714.60px;font-size:10.5px;line-height:normal;white-space:nowrap;color:#595959;font-weight:400;transform:scaleX(1.0404);transform-origin:0 0;">Product 1 Budget</div>
<div style="position:absolute;left:876.20px;top:714.60px;font-size:10.5px;line-height:normal;white-space:nowrap;color:#595959;font-weight:400;transform:scaleX(1.0455);transform-origin:0 0;">Product 1 Actual</div>
<div style="position:absolute;left:979.70px;top:714.60px;font-size:10.5px;line-height:normal;white-space:nowrap;color:#595959;font-weight:400;transform:scaleX(1.0354);transform-origin:0 0;">Product 2 Budget</div>
<div style="position:absolute;left:1087.50px;top:714.60px;font-size:10.5px;line-height:normal;white-space:nowrap;color:#595959;font-weight:400;transform:scaleX(1.0390);transform-origin:0 0;">Product 2 Actual</div>
</div>
<div style="position:absolute;left:0;top:0;width:1211px;height:748px;z-index:10">
<div style="position:absolute;left:843px;top:62px;width:227px;height:341px;background:#fff;border:1px solid #c6c6c6;box-shadow:1px 2px 3px rgba(0,0,0,0.18)"></div>
<div style="position:absolute;left:844px;top:62.5px;width:224px;height:22.5px;background:#e9e9e9;"></div>
<div style="position:absolute;left:844px;top:141px;width:224px;height:22px;background:#e9e9e9;"></div>
<div style="position:absolute;left:844px;top:219px;width:224px;height:22px;background:#e9e9e9;"></div>
<div style="position:absolute;left:844px;top:297px;width:224px;height:22px;background:#e9e9e9;"></div>
<div style="position:absolute;left:844px;top:375px;width:224px;height:1px;background:#e1e1e1;"></div>
<div style="position:absolute;left:853.20px;top:66.56px;font-size:12.2px;line-height:normal;white-space:nowrap;color:#666;font-weight:700;transform:scaleX(0.9641);transform-origin:0 0;-webkit-text-stroke:0">2-D Column</div>
<div style="position:absolute;left:853.40px;top:144.96px;font-size:12.2px;line-height:normal;white-space:nowrap;color:#666;font-weight:700;transform:scaleX(0.9641);transform-origin:0 0;-webkit-text-stroke:0">3-D Column</div>
<div style="position:absolute;left:853.30px;top:222.56px;font-size:12.2px;line-height:normal;white-space:nowrap;color:#666;font-weight:700;transform:scaleX(0.9793);transform-origin:0 0;-webkit-text-stroke:0">2-D Bar</div>
<div style="position:absolute;left:853.50px;top:300.36px;font-size:12.2px;line-height:normal;white-space:nowrap;color:#666;font-weight:700;transform:scaleX(0.9632);transform-origin:0 0;-webkit-text-stroke:0">3-D Bar</div>
<div style="position:absolute;left:875.62px;top:381.96px;font-size:12.2px;line-height:normal;white-space:nowrap;color:#444;font-weight:400;transform:scaleX(0.9810);transform-origin:0 0;">More Column Charts...</div>
<div style="position:absolute;left:876.6px;top:394px;width:9px;height:1px;background:#444;"></div>
<div style="position:absolute;left:900px;top:85px;width:55.5px;height:55.5px;background:#c6c6c6;"></div>
<svg style="left:0;top:0" width="1211" height="748" viewBox="0 0 1211 748"><line x1="852.5" y1="94" x2="852.5" y2="131" stroke="#767676" stroke-width="1"/><line x1="852.5" y1="130.5" x2="892" y2="130.5" stroke="#767676" stroke-width="1"/><rect x="856.5" y="110.5" width="7" height="20" fill="#fff" stroke="#767676" stroke-width="1"/><rect x="863.5" y="100.5" width="7" height="30" fill="#d4d4d4" stroke="#767676" stroke-width="1"/><rect x="874.5" y="103.5" width="7" height="27" fill="#fff" stroke="#767676" stroke-width="1"/><rect x="881.5" y="110.5" width="7" height="20" fill="#d4d4d4" stroke="#767676" stroke-width="1"/><line x1="908.5" y1="94" x2="908.5" y2="131" stroke="#767676" stroke-width="1"/><line x1="908.5" y1="130.5" x2="948" y2="130.5" stroke="#767676" stroke-width="1"/><rect x="915.5" y="102.5" width="10" height="17" fill="#d4d4d4" stroke="#767676" stroke-width="1"/><rect x="915.5" y="119.5" width="10" height="11" fill="#fff" stroke="#767676" stroke-width="1"/><rect x="932.5" y="96.5" width="10" height="17" fill="#d4d4d4" stroke="#767676" stroke-width="1"/><rect x="932.5" y="113.5" width="10" height="17" fill="#fff" stroke="#767676" stroke-width="1"/><line x1="964.5" y1="94" x2="964.5" y2="131" stroke="#767676" stroke-width="1"/><line x1="964.5" y1="130.5" x2="1004" y2="130.5" stroke="#767676" stroke-width="1"/><rect x="971.5" y="96.5" width="10" height="23" fill="#d4d4d4" stroke="#767676" stroke-width="1"/><rect x="971.5" y="119.5" width="10" height="11" fill="#fff" stroke="#767676" stroke-width="1"/><rect x="988.5" y="96.5" width="10" height="17" fill="#d4d4d4" stroke="#767676" stroke-width="1"/><rect x="988.5" y="113.5" width="10" height="17" fill="#fff" stroke="#767676" stroke-width="1"/><line x1="856.5" y1="172" x2="856.5" y2="198" stroke="#767676" stroke-width="1"/><line x1="852" y1="203" x2="857" y2="198" stroke="#767676" stroke-width="1"/><line x1="856.5" y1="198.5" x2="891" y2="198.5" stroke="#767676" stroke-width="1"/><path d="M858.5 191.5 h5.5 v17 h-5.5 z" fill="#fff" stroke="#767676"/><path d="M858.5 191.5 l3 -3 h5.5 l-3 3 z" fill="#fff" stroke="#767676"/><path d="M864.0 191.5 l3 -3 v17 l-3 3 z" fill="#d4d4d4" stroke="#767676"/><path d="M864.5 180.5 h5.5 v28 h-5.5 z" fill="#d4d4d4" stroke="#767676"/><path d="M864.5 180.5 l3 -3 h5.5 l-3 3 z" fill="#fff" stroke="#767676"/><path d="M870.0 180.5 l3 -3 v28 l-3 3 z" fill="#d4d4d4" stroke="#767676"/><path d="M875.5 183.5 h5.5 v25 h-5.5 z" fill="#fff" stroke="#767676"/><path d="M875.5 183.5 l3 -3 h5.5 l-3 3 z" fill="#fff" stroke="#767676"/><path d="M881.0 183.5 l3 -3 v25 l-3 3 z" fill="#d4d4d4" stroke="#767676"/><path d="M881.5 188.5 h5.5 v20 h-5.5 z" fill="#d4d4d4" stroke="#767676"/><path d="M881.5 188.5 l3 -3 h5.5 l-3 3 z" fill="#fff" stroke="#767676"/><path d="M887.0 188.5 l3 -3 v20 l-3 3 z" fill="#d4d4d4" stroke="#767676"/><line x1="914.5" y1="172" x2="914.5" y2="198" stroke="#767676" stroke-width="1"/><line x1="910" y1="203" x2="915" y2="198" stroke="#767676" stroke-width="1"/><line x1="914.5" y1="198.5" x2="949" y2="198.5" stroke="#767676" stroke-width="1"/><path d="M917.5 184.5 h9 v12 h-9 z" fill="#d4d4d4" stroke="#767676"/><path d="M917.5 184.5 l3 -3 h9 l-3 3 z" fill="#fff" stroke="#767676"/><path d="M926.5 184.5 l3 -3 v12 l-3 3 z" fill="#d4d4d4" stroke="#767676"/><path d="M917.5 196.5 h9 v12 h-9 z" fill="#fff" stroke="#767676"/><path d="M917.5 196.5 l3 -3 h9 l-3 3 z" fill="#fff" stroke="#767676"/><path d="M926.5 196.5 l3 -3 v12 l-3 3 z" fill="#d4d4d4" stroke="#767676"/><line x1="852.5" y1="250.5" x2="852.5" y2="287" stroke="#767676" stroke-width="1"/><line x1="852.5" y1="286.5" x2="892" y2="286.5" stroke="#767676" stroke-width="1"/><rect x="852.5" y="252.5" width="20" height="7" fill="#fff" stroke="#767676" stroke-width="1"/><rect x="852.5" y="259.5" width="30" height="7" fill="#d4d4d4" stroke="#767676" stroke-width="1"/><rect x="852.5" y="269.5" width="27" height="7" fill="#fff" stroke="#767676" stroke-width="1"/><rect x="852.5" y="276.5" width="20" height="7" fill="#d4d4d4" stroke="#767676" stroke-width="1"/><line x1="908.5" y1="250.5" x2="908.5" y2="287" stroke="#767676" stroke-width="1"/><line x1="908.5" y1="286.5" x2="948" y2="286.5" stroke="#767676" stroke-width="1"/><rect x="908.5" y="254.5" width="11" height="10" fill="#fff" stroke="#767676" stroke-width="1"/><rect x="919.5" y="254.5" width="17" height="10" fill="#d4d4d4" stroke="#767676" stroke-width="1"/><rect x="908.5" y="271.5" width="17" height="10" fill="#fff" stroke="#767676" stroke-width="1"/><rect x="925.5" y="271.5" width="17" height="10" fill="#d4d4d4" stroke="#767676" stroke-width="1"/><line x1="964.5" y1="250.5" x2="964.5" y2="287" stroke="#767676" stroke-width="1"/><line x1="964.5" y1="286.5" x2="1004" y2="286.5" stroke="#767676" stroke-width="1"/><rect x="964.5" y="254.5" width="11" height="10" fill="#fff" stroke="#767676" stroke-width="1"/><rect x="975.5" y="254.5" width="23" height="10" fill="#d4d4d4" stroke="#767676" stroke-width="1"/><rect x="964.5" y="271.5" width="17" height="10" fill="#fff" stroke="#767676" stroke-width="1"/><rect x="981.5" y="271.5" width="17" height="10" fill="#d4d4d4" stroke="#767676" stroke-width="1"/><line x1="856.5" y1="326.5" x2="856.5" y2="363.5" stroke="#767676" stroke-width="1"/><line x1="852.3" y1="367.7" x2="856.5" y2="363.5" stroke="#767676" stroke-width="1"/><line x1="856.5" y1="363.5" x2="892" y2="363.5" stroke="#767676" stroke-width="1"/><line x1="914.5" y1="326.5" x2="914.5" y2="363.5" stroke="#767676" stroke-width="1"/><line x1="910.9" y1="367.7" x2="914.5" y2="363.5" stroke="#767676" stroke-width="1"/><line x1="914.5" y1="363.5" x2="946" y2="363.5" stroke="#767676" stroke-width="1"/><line x1="970.5" y1="326.5" x2="970.5" y2="363.5" stroke="#767676" stroke-width="1"/><line x1="967.2" y1="367.7" x2="970.5" y2="363.5" stroke="#767676" stroke-width="1"/><line x1="970.5" y1="363.5" x2="1002" y2="363.5" stroke="#767676" stroke-width="1"/><path d="M853.5 330.5 l3 -3 H874.5 l-3 3 Z" fill="#fff" stroke="#767676"/><path d="M871.5 330.5 l3 -3 V334.5 l-3 3 Z" fill="#d4d4d4" stroke="#767676"/><rect x="853.5" y="330.5" width="18.0" height="7.0" fill="#fff" stroke="#767676"/><path d="M853.5 337.5 l3 -3 H883.5 l-3 3 Z" fill="#fff" stroke="#767676"/><path d="M880.5 337.5 l3 -3 V341.5 l-3 3 Z" fill="#d4d4d4" stroke="#767676"/><rect x="853.5" y="337.5" width="0.0" height="7.0" fill="#d4d4d4" stroke="#767676"/><rect x="853.5" y="337.5" width="27.0" height="7.0" fill="#d4d4d4" stroke="#767676"/><path d="M853.5 347.5 l3 -3 H879.5 l-3 3 Z" fill="#fff" stroke="#767676"/><path d="M876.5 347.5 l3 -3 V351.5 l-3 3 Z" fill="#d4d4d4" stroke="#767676"/><rect x="853.5" y="347.5" width="23.0" height="7.0" fill="#fff" stroke="#767676"/><path d="M853.5 354.5 l3 -3 H875.5 l-3 3 Z" fill="#fff" stroke="#767676"/><path d="M872.5 354.5 l3 -3 V358.5 l-3 3 Z" fill="#d4d4d4" stroke="#767676"/><rect x="853.5" y="354.5" width="0.0" height="7.0" fill="#d4d4d4" stroke="#767676"/><rect x="853.5" y="354.5" width="19.0" height="7.0" fill="#d4d4d4" stroke="#767676"/><path d="M909.5 335.5 l4 -4 H936.5 l-4 4 Z" fill="#fff" stroke="#767676"/><path d="M932.5 335.5 l4 -4 V339.5 l-4 4 Z" fill="#d4d4d4" stroke="#767676"/><rect x="909.5" y="335.5" width="8.0" height="8.0" fill="#fff" stroke="#767676"/><rect x="917.5" y="335.5" width="15.0" height="8.0" fill="#d4d4d4" stroke="#767676"/><path d="M909.5 351.5 l4 -4 H945.5 l-4 4 Z" fill="#fff" stroke="#767676"/><path d="M941.5 351.5 l4 -4 V355.5 l-4 4 Z" fill="#d4d4d4" stroke="#767676"/><rect x="909.5" y="351.5" width="16.0" height="8.0" fill="#fff" stroke="#767676"/><rect x="925.5" y="351.5" width="16.0" height="8.0" fill="#d4d4d4" stroke="#767676"/><path d="M965.5 335.5 l4 -4 H1000.5 l-4 4 Z" fill="#fff" stroke="#767676"/><path d="M996.5 335.5 l4 -4 V339.5 l-4 4 Z" fill="#d4d4d4" stroke="#767676"/><rect x="965.5" y="335.5" width="8.0" height="8.0" fill="#fff" stroke="#767676"/><rect x="973.5" y="335.5" width="23.0" height="8.0" fill="#d4d4d4" stroke="#767676"/><path d="M965.5 351.5 l4 -4 H1000.5 l-4 4 Z" fill="#fff" stroke="#767676"/><path d="M996.5 351.5 l4 -4 V355.5 l-4 4 Z" fill="#d4d4d4" stroke="#767676"/><rect x="965.5" y="351.5" width="16.0" height="8.0" fill="#fff" stroke="#767676"/><rect x="981.5" y="351.5" width="15.0" height="8.0" fill="#d4d4d4" stroke="#767676"/><line x1="848.5" y1="381" x2="848.5" y2="395.8" stroke="#767676" stroke-width="1.2"/><line x1="848" y1="395.3" x2="864" y2="395.3" stroke="#767676" stroke-width="1.2"/><rect x="851.5" y="385.5" width="2" height="9.5" fill="#fff" stroke="#6d6d6d" stroke-width="0.9"/><rect x="853.5" y="389.5" width="2" height="5.5" fill="#bbb" stroke="#6d6d6d" stroke-width="0.9"/><rect x="857.3" y="387.3" width="2" height="7.7" fill="#fff" stroke="#6d6d6d" stroke-width="0.9"/><rect x="859.3" y="382.5" width="2.2" height="12.5" fill="#bbb" stroke="#6d6d6d" stroke-width="0.9"/></svg>
<svg style="left:922px;top:116px" width="14" height="21" viewBox="0 0 14 21"><path d="M1 1 L1 16 L4.5 12.5 L7 18.5 L9.5 17.5 L7 11.5 L12 11.5 Z" fill="#fff" stroke="#000" stroke-width="1" stroke-linejoin="miter"/></svg>
</div>
<div style="position:absolute;left:0;top:0;width:1211px;height:748px;z-index:12">
<div style="position:absolute;left:923.5px;top:136px;width:213px;height:98.5px;background:#fff;border:1px solid #bebebe;box-shadow:1px 1px 3px rgba(0,0,0,0.15)"></div>
<div style="position:absolute;left:935.00px;top:144.29px;font-size:11.5px;line-height:normal;white-space:nowrap;color:#505050;font-weight:700;transform:scaleX(0.9969);transform-origin:0 0;-webkit-text-stroke:0">Stacked Column</div>
<div style="position:absolute;left:935.00px;top:165.59px;font-size:11.5px;line-height:normal;white-space:nowrap;color:#505050;font-weight:400;transform:scaleX(1.0259);transform-origin:0 0;">Use this chart type to:</div>
<div style="position:absolute;left:935.00px;top:180.39px;font-size:11.5px;line-height:normal;white-space:nowrap;color:#505050;font-weight:400;transform:scaleX(1.0345);transform-origin:0 0;">• Compare parts of a whole.</div>
<div style="position:absolute;left:935.00px;top:195.19px;font-size:11.5px;line-height:normal;white-space:nowrap;color:#505050;font-weight:400;transform:scaleX(1.0398);transform-origin:0 0;">• Show how parts of a whole</div>
<div style="position:absolute;left:935.00px;top:210.39px;font-size:11.5px;line-height:normal;white-space:nowrap;color:#505050;font-weight:400;transform:scaleX(1.0415);transform-origin:0 0;">change over time.</div>
</div>
<div style="position:absolute;left:0;top:0;width:1211px;height:748px;z-index:20">
<svg style="left:0;top:0;filter:drop-shadow(2px 2px 2px rgba(0,0,0,0.42))" width="1211" height="748" viewBox="0 0 1211 748"><path d="M152.95 199.09 L155.17 63.58 L164.92 63.74 L150.40 34.00 L134.92 63.25 L144.67 63.41 L142.45 198.91 A5.25 5.25 0 0 0 152.95 199.09 Z" fill="#e84b44"/><path d="M169.85 30.05 L810.57 47.83 L810.30 57.58 L840.20 43.40 L811.13 27.59 L810.86 37.33 L170.15 19.55 A5.25 5.25 0 0 0 169.85 30.05 Z" fill="#e84b44"/><path d="M866.07 68.57 L882.45 88.14 L874.97 94.40 L905.40 107.40 L897.98 75.15 L890.50 81.40 L874.13 61.83 A5.25 5.25 0 0 0 866.07 68.57 Z" fill="#e84b44"/></svg>
</div>
</body></html>
